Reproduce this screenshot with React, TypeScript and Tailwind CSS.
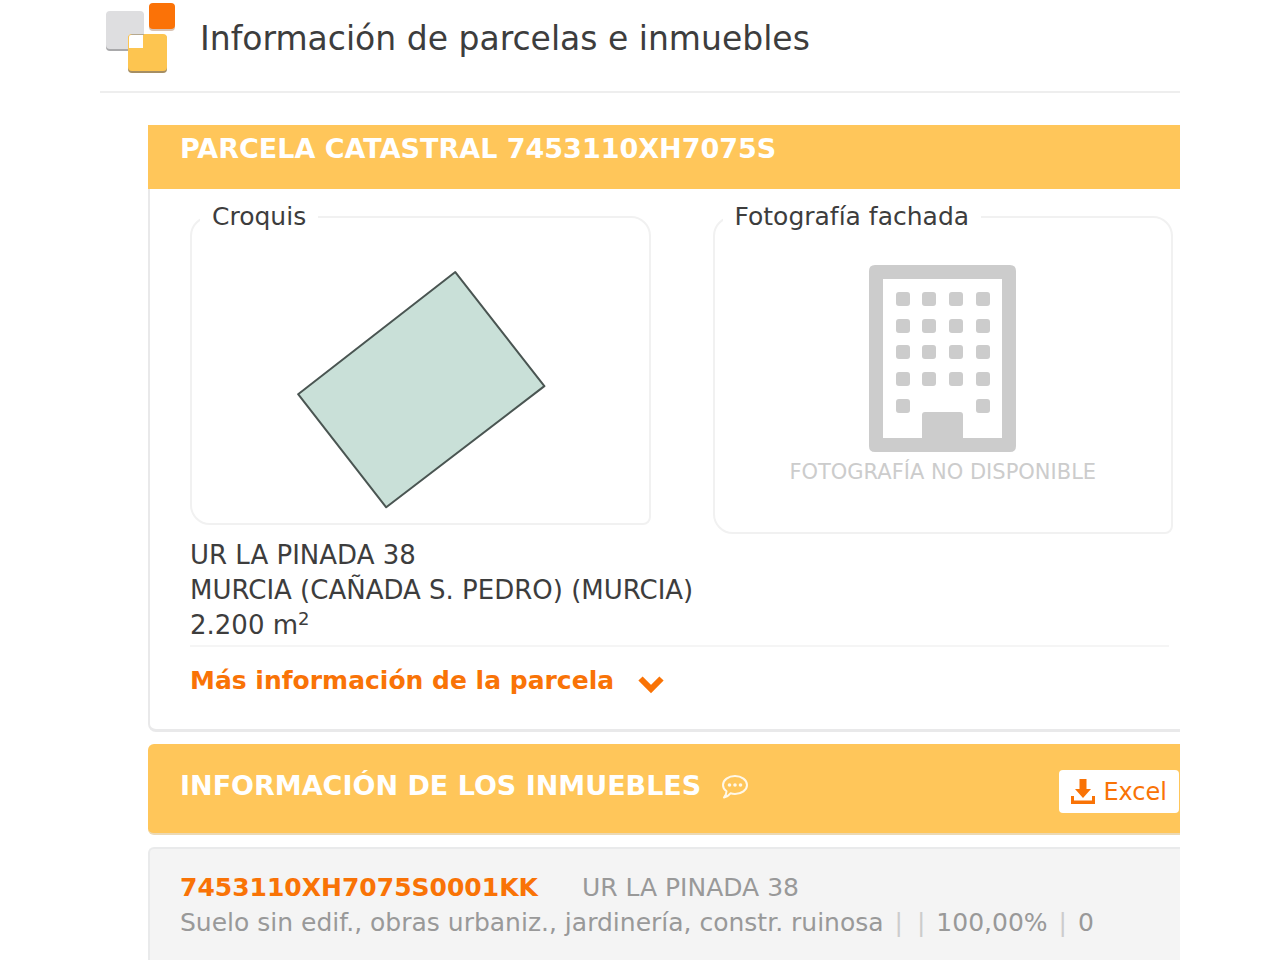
// Parcel and property sheet: sketch, facade photo and the list of properties.

import type { ReactNode } from 'react';

interface Inmueble {
  referencia: string;
  direccion: string;
  uso: string;
  detalles: string[];
}

const PARCELA = {
  referencia: '7453110XH7075S',
  direccion: 'UR LA PINADA 38',
  municipio: 'MURCIA (CAÑADA S. PEDRO) (MURCIA)',
  superficie: '2.200 m',
};

const INMUEBLES: Inmueble[] = [
  {
    referencia: '7453110XH7075S0001KK',
    direccion: 'UR LA PINADA 38',
    uso: 'Suelo sin edif., obras urbaniz., jardinería, constr. ruinosa',
    detalles: ['', '100,00%', '0'],
  },
];

export default function App() {
  return (
    <div className="h-screen overflow-hidden bg-white px-25 font-['DejaVu_Sans',Verdana,sans-serif] text-[25px] text-[#3d3d3d]">
      <header className="flex h-[93px] items-start gap-6 border-b-2 border-[#eeeeee] pl-1">
        <Logo />
        <h1 className="pt-4 text-[33px] leading-[46px] whitespace-nowrap">Información de parcelas e inmuebles</h1>
      </header>

      <main className="pt-8 pl-12">
        <section className="rounded-bl-lg border-b-3 border-l-2 border-[#e9e9ea]">
          <h2 className="-ml-0.5 h-16 bg-[#ffc65a] pt-2 pl-8 text-[27px] leading-8 font-bold text-white">
            PARCELA CATASTRAL {PARCELA.referencia}
          </h2>
          <div className="pt-3 pr-[7px] pb-[30px] pl-10">
            <div className="grid grid-cols-2 items-start gap-[62px]">
              <Marco titulo="Croquis">
                <Croquis />
              </Marco>
              <Marco titulo="Fotografía fachada">
                <div className="flex flex-col items-center pt-8 pb-11">
                  <Edificio />
                  <p className="pt-1 text-[21px] leading-8 text-[#cccccc]">FOTOGRAFÍA NO DISPONIBLE</p>
                </div>
              </Marco>
            </div>
            <div className="mr-1 border-b-2 border-[#f5f5f5] pt-1 pb-0.5 text-[26px] leading-[35px]">
              <p>{PARCELA.direccion}</p>
              <p>{PARCELA.municipio}</p>
              <p>
                {PARCELA.superficie}
                <sup className="text-lg leading-none">2</sup>
              </p>
            </div>
            <button type="button" className="mt-4 flex items-center gap-6 leading-9 font-bold text-[#f97306]">
              Más información de la parcela
              <Chevron />
            </button>
          </div>
        </section>

        <section className="mt-3 flex h-[91px] justify-between rounded-l-md border-b-2 border-[#ecd9b4] bg-[#ffc65a] pl-8">
          <h2 className="flex items-start gap-5 pt-[26px] text-[27px] leading-8 font-bold text-white">
            INFORMACIÓN DE LOS INMUEBLES
            <Comentario />
          </h2>
          <button
            type="button"
            className="mt-[26px] mr-px flex h-[43px] items-center gap-2 rounded-sm bg-white px-3 text-2xl text-[#f97306]"
          >
            <Descarga />
            Excel
          </button>
        </section>

        {INMUEBLES.map((i) => (
          <article
            key={i.referencia}
            className="mt-3 h-40 rounded-tl-md border-t-2 border-l-2 border-[#e9eaeb] bg-[#f4f4f4] pt-[21px] pl-[30px] leading-[35px] whitespace-nowrap text-[#999999]"
          >
            <p>
              <a href={`#${i.referencia}`} className="mr-11 font-bold text-[#f97306]">
                {i.referencia}
              </a>
              {i.direccion}
            </p>
            <p>
              {i.uso}
              {i.detalles.map((d, n) => (
                <span key={n}>
                  {' '}
                  <span className="mx-[3px] text-[#cccccc]">|</span> {d}
                </span>
              ))}
            </p>
          </article>
        ))}
      </main>
    </div>
  );
}

function Marco({ titulo, children }: { titulo: string; children: ReactNode }) {
  return (
    <fieldset className="rounded-[20px] rounded-br-lg border-2 border-[#f1f1f1]">
      <legend className="ml-2 px-3 leading-8">{titulo}</legend>
      {children}
    </fieldset>
  );
}

function Logo() {
  return (
    <svg width="72" height="76" viewBox="0 0 72 76" aria-hidden="true" className="shrink-0">
      <rect x="2" y="13" width="38" height="38" rx="4" fill="#a9a9ab" />
      <rect x="2" y="11" width="38" height="38" rx="4" fill="#dedee0" />
      <rect x="45" y="4" width="26" height="27" rx="4" fill="#d9c2b2" />
      <rect x="45" y="3" width="26" height="26" rx="4" fill="#fb7207" />
      <rect x="24" y="35" width="39" height="38" rx="4" fill="#a58e63" />
      <rect x="24" y="34" width="39" height="37" rx="4" fill="#fdc550" />
      <path d="M28 34h12v1H26z" fill="#b5a88f" />
      <path d="M25 37q0-2 2-2h12v13H25z" fill="#fff" />
    </svg>
  );
}

function Croquis() {
  return (
    <svg viewBox="0 0 456 290" className="w-full" role="img" aria-label="Croquis de la parcela">
      <path
        d="M263 39 352 153 194 274 106 161Z"
        fill="#c9e0d8"
        stroke="#4a5552"
        strokeWidth="2"
        strokeLinejoin="round"
      />
    </svg>
  );
}

function Edificio() {
  const filas = [27, 54, 80, 107, 134];
  const columnas = [27, 53, 80, 107];
  return (
    <svg width="147" height="187" viewBox="0 0 147 187" fill="#cccccc" aria-hidden="true">
      <path
        fillRule="evenodd"
        d="M6 0H141Q147 0 147 6V181Q147 187 141 187H6Q0 187 0 181V6Q0 0 6 0ZM14 14V173H53V150Q53 147 56 147H91Q94 147 94 150V173H133V14Z"
      />
      {filas.map((y) =>
        columnas
          .filter((x) => y !== 134 || x === 27 || x === 107)
          .map((x) => <rect key={`${x}-${y}`} x={x} y={y} width="14" height="14" rx="3" />),
      )}
    </svg>
  );
}

function Chevron() {
  return (
    <svg width="26" height="18" viewBox="0 0 26 18" fill="none" className="mt-2" aria-hidden="true">
      <path d="M2.5 2.5 13 13 23.5 2.5" stroke="#f97306" strokeWidth="6" />
    </svg>
  );
}

function Comentario() {
  return (
    <svg width="28" height="26" viewBox="0 0 28 26" fill="none" className="mt-1" aria-hidden="true">
      <path
        d="M14 2C20.5 2 26 6 26 11S20.5 20 14 20Q11.5 20 9.5 19.3Q7 22.5 3 23.5Q5.5 21 5.5 17.3Q2 14.8 2 11C2 6 7.5 2 14 2Z"
        stroke="#fff8e8"
        strokeWidth="2"
        strokeLinejoin="round"
      />
      <g fill="#fff8e8">
        <circle cx="8.5" cy="11" r="1.8" />
        <circle cx="14" cy="11" r="1.8" />
        <circle cx="19.5" cy="11" r="1.8" />
      </g>
    </svg>
  );
}

function Descarga() {
  return (
    <svg width="24" height="26" viewBox="0 0 24 26" fill="#f97306" aria-hidden="true">
      <path d="M8.5 0H15.5V10H20L12 19 4 10H8.5Z" />
      <path d="M0 17H3V21.5H21V17H24V25H0Z" />
    </svg>
  );
}
